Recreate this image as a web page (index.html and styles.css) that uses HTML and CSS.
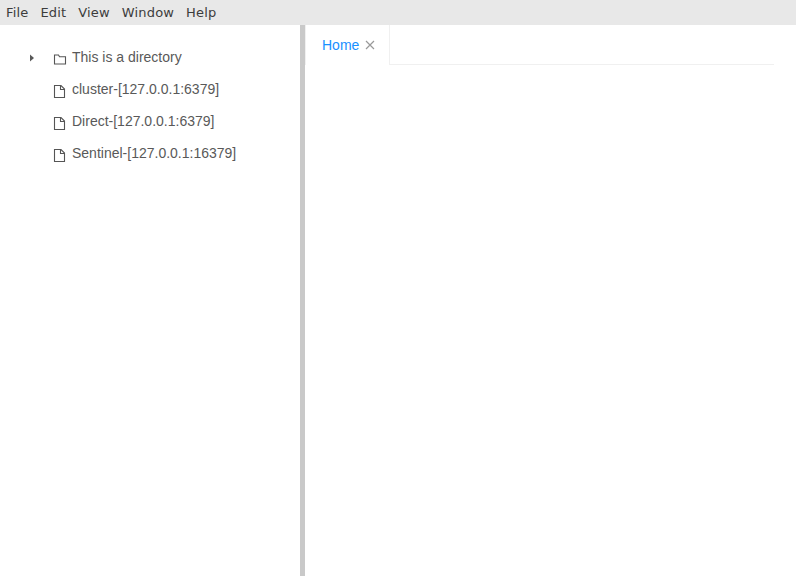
FILE: index.html
```html
<!DOCTYPE html>
<html lang="en">
<head>
<meta charset="utf-8">
<title>Redis client</title>
<link rel="stylesheet" href="styles.css">
</head>
<body>
<nav class="menubar">
  <span class="menu-item">File</span>
  <span class="menu-item">Edit</span>
  <span class="menu-item">View</span>
  <span class="menu-item">Window</span>
  <span class="menu-item">Help</span>
</nav>
<div class="workspace">
  <aside class="sidebar">
    <ul class="tree">
      <li class="tree-row">
        <svg class="caret" viewBox="0 0 6 8"><path d="M1 0.5 5 4 1 7.5Z"/></svg>
        <svg class="node-icon" viewBox="0 0 14 14"><path d="M1.500 3h4l1 1.700h6v7.300h-11z"/></svg>
        <span class="label">This is a directory</span>
      </li>
      <li class="tree-row">
        <span class="caret-space"></span>
        <svg class="node-icon" viewBox="0 0 14 14"><path d="M1.500 1.500h6.500l3.500 3.500v8.500h-10zM7.500 1.500v4h4"/></svg>
        <span class="label">cluster-[127.0.0.1:6379]</span>
      </li>
      <li class="tree-row">
        <span class="caret-space"></span>
        <svg class="node-icon" viewBox="0 0 14 14"><path d="M1.500 1.500h6.500l3.500 3.500v8.500h-10zM7.500 1.500v4h4"/></svg>
        <span class="label">Direct-[127.0.0.1:6379]</span>
      </li>
      <li class="tree-row">
        <span class="caret-space"></span>
        <svg class="node-icon" viewBox="0 0 14 14"><path d="M1.500 1.500h6.500l3.500 3.500v8.500h-10zM7.500 1.500v4h4"/></svg>
        <span class="label">Sentinel-[127.0.0.1:16379]</span>
      </li>
    </ul>
  </aside>
  <div class="splitter"></div>
  <main class="content">
    <div class="tabbar">
      <div class="tab">
        <span class="tab-title">Home</span>
        <svg class="tab-close" viewBox="0 0 10 10"><path d="M1 1 9 9M9 1 1 9"/></svg>
      </div>
    </div>
  </main>
</div>
</body>
</html>
```
FILE: styles.css
```css
* { box-sizing: border-box; }
html, body { height: 100%; }
body {
  margin: 0;
  display: flex;
  flex-direction: column;
  overflow: hidden;
  background: #fff;
  font-family: "Liberation Sans", Arial, sans-serif;
  font-size: 14px;
}
.menubar {
  flex: none;
  height: 25px;
  display: flex;
  align-items: center;
  gap: 12px;
  padding: 0 6px;
  background: #e8e8e8;
  color: #3c3c3c;
  font-family: "DejaVu Sans", sans-serif;
  font-size: 13px;
  letter-spacing: 0.17px;
}
.workspace { flex: 1; display: flex; min-height: 0; }
.sidebar { flex: none; width: 300px; padding-top: 16px; }
.tree { list-style: none; margin: 0; padding: 0 0 0 29px; }
.tree-row {
  height: 32px;
  display: flex;
  align-items: center;
  color: #595959;
  line-height: 32px;
}
.caret { flex: none; width: 6px; height: 8px; margin-top: 2px; fill: #595959; }
.caret-space { flex: none; width: 6px; }
.node-icon {
  flex: none;
  width: 14px;
  height: 14px;
  margin: 3px 5px 0 18px;
  fill: none;
  stroke: #555;
  stroke-width: 1.1;
}
.splitter { flex: none; width: 5px; background: #c9c9c9; }
.content { flex: 1; min-width: 0; padding-right: 22px; }
.tabbar {
  height: 40px;
  display: flex;
  border-bottom: 1px solid #f0f0f0;
  margin-left: 16px;
}
.tab {
  width: 85px;
  margin-left: -16px;
  margin-bottom: -1px;
  padding-left: 16px;
  display: flex;
  align-items: center;
  gap: 6px;
  border-left: 1px solid #f0f0f0;
  border-right: 1px solid #f0f0f0;
  background: #fff;
}
.tab-title { color: #1890ff; }
.tab-close { width: 10px; height: 10px; fill: none; stroke: #999; stroke-width: 1.2; }
```
